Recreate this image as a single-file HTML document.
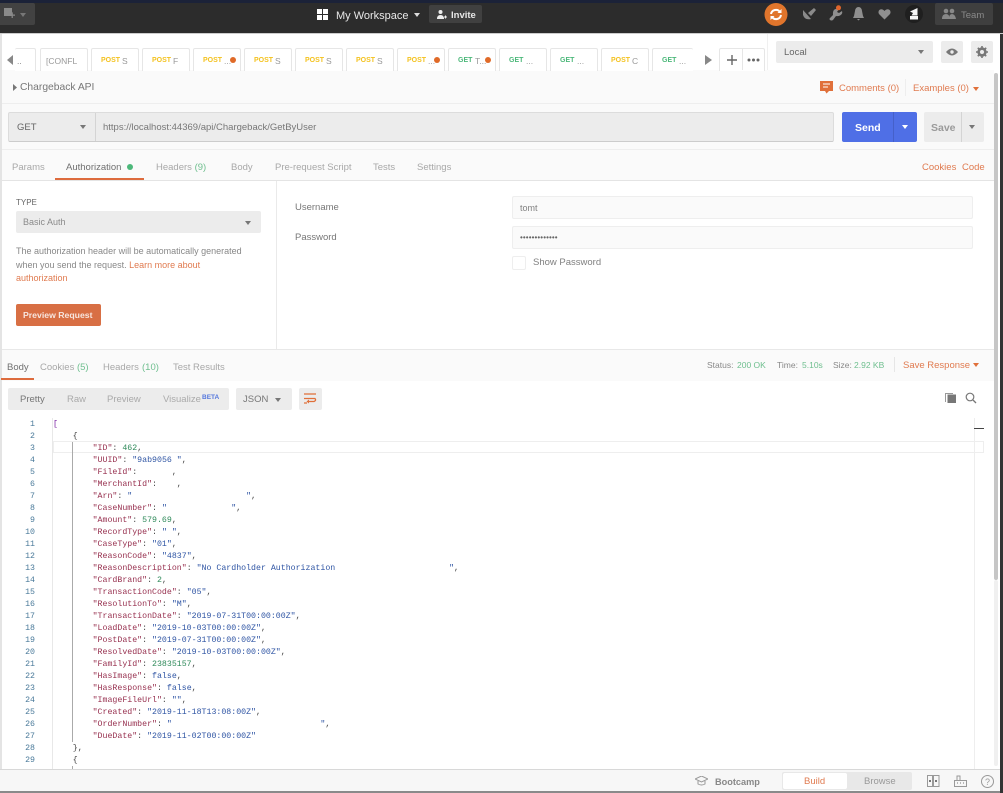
<!DOCTYPE html>
<html><head><meta charset="utf-8"><style>
html,body{margin:0;padding:0;background:#fff}
#p{position:relative;width:1003px;height:793px;overflow:hidden;background:#fff;font-family:"Liberation Sans",sans-serif;font-size:9.5px;color:#808080;filter:blur(.35px)}
#p div,#p span.a,#p svg{position:absolute}
.t{white-space:nowrap;line-height:12px;margin-top:1px}
.tab{top:48px;width:46px;height:22px;background:#fff;border:1px solid #e6e6e6;border-bottom:0;border-radius:2px 2px 0 0;box-sizing:content-box}
.m{position:absolute;top:6px;left:9px;font-size:7px;font-weight:bold;line-height:12px;white-space:nowrap}
.p{color:#f4c21f}.g{color:#4cb87a}
.r{position:absolute;left:25px;top:6px;font-size:8.5px;color:#999;line-height:12px}
.d{position:absolute;width:6px;height:6px;border-radius:50%;background:#e06a28;left:34px;top:8px}
.c{width:0;height:0;border-left:3.5px solid transparent;border-right:3.5px solid transparent;border-top:4px solid #777}
.o{color:#e07b50}
.ln{left:0;width:35px;text-align:right;font:8.25px/12px "Liberation Mono",monospace;color:#4a7a9a;margin-top:1px}
.cd{left:53px;font:8.25px/12px "Liberation Mono",monospace;white-space:pre;color:#444;margin-top:1px}
.k{color:#97304f}.s{color:#2f55a4}.n{color:#2f8a5a}
</style></head><body><div id="p">
<!-- top bar -->
<div style="left:0;top:0;width:1003px;height:3px;background:#1b2238"></div>
<div style="left:0;top:3px;width:1003px;height:30px;background:#2c2c2c"></div>
<div style="left:0;top:33px;width:1003px;height:1px;background:#ccc"></div>
<div style="left:0;top:3px;width:35px;height:22px;background:#424242;border-radius:0 2px 2px 0"></div>
<div style="left:4px;top:8px;width:8px;height:8px;background:#8a8a8a"></div>
<div class="t" style="left:9px;top:9px;font-size:11px;color:#8a8a8a;font-weight:bold">+</div>
<div class="c" style="left:20px;top:13px;border-top-color:#777"></div>
<svg style="left:317px;top:9px" width="11" height="11"><path d="M0 0h5v5H0zM6 0h5v5H6zM0 6h5v5H0zM6 6h5v5H6z" fill="#fff"/></svg>
<div class="t" style="left:336px;top:9px;font-size:11px;color:#e8e8e8">My Workspace</div>
<div class="c" style="left:414px;top:13px;border-top-color:#ddd"></div>
<div style="left:429px;top:5px;width:53px;height:18px;background:#404040;border-radius:2px"></div>
<svg style="left:436px;top:9px" width="11" height="11"><circle cx="4.500" cy="3" r="2" fill="#eee"/><path d="M1 10q0-4 3.500-4t3.500 4z" fill="#eee"/><path d="M8 8h3M9.500 6.500v3" stroke="#eee"/></svg>
<div class="t" style="left:451px;top:9px;font-size:9.500px;color:#e8e8e8;font-weight:bold">Invite</div>
<svg style="left:764px;top:3px" width="24" height="24"><circle cx="12" cy="11.500" r="11.500" fill="#e0752c"/><path d="M7 11a5 5 0 0 1 9-2M17 12a5 5 0 0 1-9 2" stroke="#fff" stroke-width="2" fill="none"/><path d="M17.500 6v4h-4zM6.500 17v-4h4z" fill="#fff"/></svg>
<svg style="left:803px;top:7px" width="15" height="14"><path d="M0 3l8 9q-5 1-7-2-2-3-1-7zM5 6l6-5 2 2-5 6z" fill="#8a8a8a"/></svg>
<svg style="left:829px;top:5px" width="17" height="16"><path d="M1 15q-1-1 0-2l3-3q-.5-4 1.500-5.500Q8 3 10 4L8 7l2 1 3-2q1 3-2 4.500-2 1-4 .5l-3 4q-1.500 1-3 0z" fill="#8f8f8f"/><circle cx="9.500" cy="2.800" r="2.500" fill="#e0652c"/></svg>
<svg style="left:853px;top:7px" width="11" height="14"><path d="M5.500 0q3 0 3.500 4l1 5 1 2H0l1-2 1-5q.5-4 3.500-4zM4 12h3l-1.500 1.500z" fill="#8f8f8f"/></svg>
<svg style="left:878px;top:8px" width="13" height="12"><path d="M6.500 11.500L1 6q-1.500-3 1-4.500 2.500-1 4.500 1.500Q8.500.5 11 1.500 13.500 3 12 6z" fill="#8f8f8f"/></svg>
<svg style="left:905px;top:5px" width="18" height="18"><circle cx="9" cy="9" r="9" fill="#1f1f1f"/><path d="M5 14.500V11h8v3.500zM6.500 10.500L8 8 5 6.500 12.500 3v7.500z" fill="#f5f5f5"/></svg>
<div style="left:935px;top:3px;width:58px;height:22px;background:#3f3f3f;border-radius:2px"></div>
<svg style="left:942px;top:8px" width="14" height="12"><circle cx="4" cy="3" r="2.300" fill="#888"/><circle cx="10" cy="3" r="2.300" fill="#888"/><path d="M0 11q0-5 4-5t3 5zM7 11q0-5 3-5t4 5z" fill="#888"/></svg>
<div class="t" style="left:961px;top:9px;font-size:9.500px;color:#8a8a8a">Team</div>
<!-- tabs -->
<div style="left:0;top:34px;width:2px;height:735px;background:#e4e4e4"></div>
<div style="left:2px;top:70px;width:992px;height:33px;background:#fafafa"></div>
<svg style="left:7px;top:55px" width="7" height="10"><path d="M6 0v10L0 5z" fill="#888"/></svg>
<div class="tab" style="left:15px;width:20px;border-left:0"></div>
<div class="t" style="left:17px;top:54px;font-size:8.500px">..</div>
<div class="tab" style="left:40px"><span class="r" style="left:5px">[CONFL</span></div>
<div class="tab" style="left:91px"><span class="m p">POST</span><span class="r" style="left:30px">S</span></div>
<div class="tab" style="left:142px"><span class="m p">POST</span><span class="r" style="left:30px">F</span></div>
<div class="tab" style="left:193px"><span class="m p">POST</span><span class="r" style="left:30px">...</span><span class="d" style="left:36px"></span></div>
<div class="tab" style="left:244px"><span class="m p">POST</span><span class="r" style="left:30px">S</span></div>
<div class="tab" style="left:295px"><span class="m p">POST</span><span class="r" style="left:30px">S</span></div>
<div class="tab" style="left:346px"><span class="m p">POST</span><span class="r" style="left:30px">S</span></div>
<div class="tab" style="left:397px"><span class="m p">POST</span><span class="r" style="left:30px">...</span><span class="d" style="left:36px"></span></div>
<div class="tab" style="left:448px"><span class="m g">GET</span><span class="r" style="left:26px">T...</span><span class="d" style="left:36px"></span></div>
<div class="tab" style="left:499px"><span class="m g">GET</span><span class="r" style="left:26px">...</span></div>
<div class="tab" style="left:550px"><span class="m g">GET</span><span class="r" style="left:26px">...</span></div>
<div class="tab" style="left:601px"><span class="m p">POST</span><span class="r" style="left:30px">C</span></div>
<div class="tab" style="left:652px;width:40px;border-right:0"><span class="m g">GET</span><span class="r" style="left:26px">...</span></div>
<svg style="left:705px;top:55px" width="7" height="10"><path d="M0 0v10l7-5z" fill="#888"/></svg>
<div class="tab" style="left:719px;width:44px"></div>
<div style="left:742px;top:49px;width:1px;height:21px;background:#e6e6e6"></div>
<svg style="left:727px;top:55px" width="10" height="10"><path d="M5 0v10M0 5h10" stroke="#666" stroke-width="1.400"/></svg>
<svg style="left:747px;top:58px" width="13" height="4"><circle cx="2" cy="2" r="1.500" fill="#666"/><circle cx="6.500" cy="2" r="1.500" fill="#666"/><circle cx="11" cy="2" r="1.500" fill="#666"/></svg>
<div style="left:767px;top:34px;width:1px;height:36px;background:#f0f0f0"></div>
<div style="left:776px;top:41px;width:157px;height:22px;background:#ececec;border-radius:2px"></div>
<div class="t" style="left:784px;top:46px;font-size:9.500px;color:#666">Local</div>
<div class="c" style="left:918px;top:50px"></div>
<div style="left:941px;top:41px;width:22px;height:22px;background:#ececec;border-radius:2px"></div>
<svg style="left:946px;top:48px" width="12" height="8"><path d="M0 4q6-7 12 0-6 7-12 0z" fill="#777"/><circle cx="6" cy="4" r="1.700" fill="#ececec"/></svg>
<div style="left:971px;top:41px;width:22px;height:22px;background:#ececec;border-radius:2px"></div>
<svg style="left:976px;top:46px" width="12" height="12"><circle cx="6" cy="6" r="3.500" fill="none" stroke="#777" stroke-width="2.400"/><path d="M6 0v12M0 6h12M1.800 1.800l8.400 8.400M10.200 1.800l-8.400 8.400" stroke="#777" stroke-width="1.600"/><circle cx="6" cy="6" r="2" fill="#ececec"/></svg>
<!-- title row -->
<svg style="left:13px;top:84px" width="4" height="7"><path d="M0 0v7l4-3.500z" fill="#777"/></svg>
<div class="t" style="left:20px;top:81px;font-size:10.300px;color:#777">Chargeback API</div>
<svg style="left:820px;top:81px" width="13" height="13"><path d="M0 0h13v10H9l-2.500 2.500L5 10H0z" fill="#e0703a"/><path d="M3 3h7M3 6h5" stroke="#fff"/></svg>
<div class="t o" style="left:839px;top:82px;font-size:9.500px">Comments (0)</div>
<div style="left:905px;top:79px;width:1px;height:17px;background:#eee"></div>
<div class="t o" style="left:913px;top:82px;font-size:9.500px">Examples (0)</div>
<div class="c" style="left:973px;top:87px;border-top-color:#e0703a"></div>
<div style="left:2px;top:103px;width:992px;height:1px;background:#eee"></div>
<!-- url row -->
<div style="left:2px;top:104px;width:992px;height:45px;background:#fafafa"></div>
<div style="left:8px;top:112px;width:826px;height:30px;background:#ececec;border:1px solid #dcdcdc;border-bottom:1px solid #ccc;border-radius:2px;box-sizing:border-box"></div>
<div style="left:95px;top:113px;width:1px;height:28px;background:#d4d4d4"></div>
<div class="t" style="left:17px;top:121px;font-size:9.500px;color:#666">GET</div>
<div class="c" style="left:80px;top:125px"></div>
<div class="t" style="left:103px;top:121px;font-size:9.500px;color:#777">https://localhost:44369/api/Chargeback/GetByUser</div>
<div style="left:842px;top:112px;width:75px;height:30px;background:#4f6fe6;border-radius:2px"></div>
<div style="left:893px;top:112px;width:1px;height:30px;background:#4560c9"></div>
<div class="t" style="left:855px;top:121px;font-size:10.500px;font-weight:bold;color:#fff">Send</div>
<div class="c" style="left:902px;top:125px;border-top-color:#fff"></div>
<div style="left:924px;top:112px;width:60px;height:30px;background:#ececec;border-radius:2px"></div>
<div style="left:961px;top:112px;width:1px;height:30px;background:#d4d4d4"></div>
<div class="t" style="left:931px;top:121px;font-size:10.500px;font-weight:bold;color:#9a9a9a">Save</div>
<div class="c" style="left:969px;top:125px"></div>
<div style="left:2px;top:149px;width:992px;height:1px;background:#eee"></div>
<!-- req tabs -->
<div style="left:2px;top:150px;width:992px;height:30px;background:#fafafa"></div>
<div class="t" style="left:12px;top:161px;color:#a8a8a8">Params</div>
<div class="t" style="left:66px;top:161px;color:#707070">Authorization</div>
<div style="left:127px;top:164px;width:6px;height:6px;border-radius:50%;background:#4cb87a"></div>
<div class="t" style="left:156px;top:161px;color:#a8a8a8">Headers <span style="color:#6fbf8f">(9)</span></div>
<div class="t" style="left:231px;top:161px;color:#a8a8a8">Body</div>
<div class="t" style="left:275px;top:161px;color:#a8a8a8">Pre-request Script</div>
<div class="t" style="left:373px;top:161px;color:#a8a8a8">Tests</div>
<div class="t" style="left:417px;top:161px;color:#a8a8a8">Settings</div>
<div class="t o" style="left:922px;top:161px">Cookies</div>
<div class="t o" style="left:962px;top:161px">Code</div>
<div style="left:2px;top:180px;width:992px;height:1px;background:#e4e4e4"></div>
<div style="left:55px;top:178px;width:89px;height:2px;background:#dd6b3d"></div>
<!-- auth -->
<div style="left:276px;top:181px;width:1px;height:168px;background:#eaeaea"></div>
<div class="t" style="left:16px;top:196px;font-size:8px;color:#666">TYPE</div>
<div style="left:16px;top:211px;width:245px;height:22px;background:#ececec;border-radius:2px"></div>
<div class="t" style="left:23px;top:215px;color:#8a8a8a;font-size:9px">Basic Auth</div>
<div class="c" style="left:245px;top:221px"></div>
<div class="t" style="left:16px;top:244px;font-size:9px;color:#888;line-height:13.500px">The authorization header will be automatically generated<br>when you send the request. <span class="o">Learn more about</span><br><span class="o">authorization</span></div>
<div style="left:16px;top:304px;width:85px;height:22px;background:#d86f44;border-radius:2px"></div>
<div class="t" style="left:23px;top:308px;font-size:8.700px;font-weight:bold;color:#f7e6df">Preview Request</div>
<div class="t" style="left:295px;top:201px;color:#777">Username</div>
<div class="t" style="left:295px;top:231px;color:#777">Password</div>
<div style="left:512px;top:196px;width:461px;height:23px;background:#fafafa;border:1px solid #eee;border-radius:2px;box-sizing:border-box"></div>
<div style="left:512px;top:226px;width:461px;height:23px;background:#fafafa;border:1px solid #eee;border-radius:2px;box-sizing:border-box"></div>
<div class="t" style="left:520px;top:201px;color:#808080;font-size:9px">tomt</div>
<div class="t" style="left:520px;top:231px;color:#666;font-size:8px;letter-spacing:.1px">•••••••••••••</div>
<div style="left:512px;top:256px;width:14px;height:14px;background:#fff;border:1px solid #eee;border-radius:2px;box-sizing:border-box"></div>
<div class="t" style="left:533px;top:256px;color:#808080;font-size:9.500px">Show Password</div>
<div style="left:2px;top:349px;width:992px;height:1px;background:#e8e8e8"></div>
<!-- response tabs -->
<div style="left:2px;top:350px;width:992px;height:31px;background:#fafafa"></div>
<div class="t" style="left:7px;top:361px;color:#707070">Body</div>
<div class="t" style="left:40px;top:361px;color:#a8a8a8">Cookies <span style="color:#6fbf8f">(5)</span></div>
<div class="t" style="left:103px;top:361px;color:#a8a8a8">Header<span style="color:#a8a8a8">s</span></div>
<div class="t" style="left:142px;top:361px;color:#6fbf8f">(10)</div>
<div class="t" style="left:173px;top:361px;color:#a8a8a8">Test Results</div>
<div style="left:1px;top:378px;width:33px;height:2px;background:#dd6b3d"></div>
<div class="t" style="left:707px;top:358px;font-size:8.500px;color:#888">Status:</div>
<div class="t" style="left:737px;top:358px;font-size:8.500px;color:#6fbf8f">200 OK</div>
<div class="t" style="left:777px;top:358px;font-size:8.500px;color:#888">Time:</div>
<div class="t" style="left:802px;top:358px;font-size:8.500px;color:#6fbf8f">5.10s</div>
<div class="t" style="left:833px;top:358px;font-size:8.500px;color:#888">Size:</div>
<div class="t" style="left:854px;top:358px;font-size:8.500px;color:#6fbf8f">2.92 KB</div>
<div style="left:894px;top:357px;width:1px;height:15px;background:#e6e6e6"></div>
<div class="t o" style="left:903px;top:359px;font-size:9.500px">Save Response</div>
<div class="c" style="left:973px;top:363px;border-top-color:#e0703a"></div>
<!-- toolbar -->
<div style="left:8px;top:388px;width:221px;height:22px;background:#ececec;border-radius:2px"></div>
<div class="t" style="left:20px;top:393px;color:#777">Pretty</div>
<div class="t" style="left:67px;top:393px;color:#aaa">Raw</div>
<div class="t" style="left:107px;top:393px;color:#aaa">Preview</div>
<div class="t" style="left:163px;top:393px;color:#aaa">Visualize</div>
<div class="t" style="left:202px;top:391px;font-size:6.500px;color:#5577dd;font-weight:bold">BETA</div>
<div style="left:236px;top:388px;width:56px;height:22px;background:#ececec;border-radius:2px"></div>
<div class="t" style="left:243px;top:393px;color:#777">JSON</div>
<div class="c" style="left:275px;top:398px"></div>
<div style="left:299px;top:388px;width:23px;height:22px;background:#ececec;border-radius:2px"></div>
<svg style="left:304px;top:393px" width="13" height="12"><path d="M0 1h12M0 5.500h11q1.500 2-1 3H4M0 10h3" stroke="#e0703a" stroke-width="1.300" fill="none"/><path d="M5 6.500v4L2.500 8.500z" fill="#e0703a"/></svg>
<svg style="left:945px;top:392px" width="12" height="12"><path d="M0 1h8v1H1v8H0z" fill="#999"/><path d="M2.500 2.500H11V11H2.500z" fill="#777"/></svg>
<svg style="left:965px;top:392px" width="12" height="12"><circle cx="5" cy="5" r="3.800" stroke="#777" stroke-width="1.200" fill="none"/><path d="M8 8l3 3" stroke="#777" stroke-width="1.300"/></svg>
<!-- code -->
<div style="left:52px;top:418px;width:1px;height:351px;background:#e8e8e8"></div>
<div style="left:53px;top:441px;width:931px;height:12px;border:1px solid #eee;box-sizing:border-box"></div>
<div style="left:72px;top:442px;width:1px;height:300px;background:#aaa"></div>
<div style="left:72px;top:766px;width:1px;height:3px;background:#aaa"></div>
<div style="left:974px;top:418px;width:1px;height:351px;background:#eee"></div>
<div style="left:974px;top:428px;width:10px;height:1px;background:#444"></div>
<div class="ln" style="top:418px">1<br>2<br>3<br>4<br>5<br>6<br>7<br>8<br>9<br>10<br>11<br>12<br>13<br>14<br>15<br>16<br>17<br>18<br>19<br>20<br>21<br>22<br>23<br>24<br>25<br>26<br>27<br>28<br>29</div>
<div class="cd" style="top:418px"><span style="color:#7a1fa2">[</span>
    {
        <span class="k">"ID"</span>: <span class="n">462</span>,
        <span class="k">"UUID"</span>: <span class="s">"9ab9056 "</span>,
        <span class="k">"FileId"</span>:       ,
        <span class="k">"MerchantId"</span>:    ,
        <span class="k">"Arn"</span>: <span class="s">"                       "</span>,
        <span class="k">"CaseNumber"</span>: <span class="s">"             "</span>,
        <span class="k">"Amount"</span>: <span class="n">579.69</span>,
        <span class="k">"RecordType"</span>: <span class="s">" "</span>,
        <span class="k">"CaseType"</span>: <span class="s">"01"</span>,
        <span class="k">"ReasonCode"</span>: <span class="s">"4837"</span>,
        <span class="k">"ReasonDescription"</span>: <span class="s">"No Cardholder Authorization                       "</span>,
        <span class="k">"CardBrand"</span>: <span class="n">2</span>,
        <span class="k">"TransactionCode"</span>: <span class="s">"05"</span>,
        <span class="k">"ResolutionTo"</span>: <span class="s">"M"</span>,
        <span class="k">"TransactionDate"</span>: <span class="s">"2019-07-31T00:00:00Z"</span>,
        <span class="k">"LoadDate"</span>: <span class="s">"2019-10-03T00:00:00Z"</span>,
        <span class="k">"PostDate"</span>: <span class="s">"2019-07-31T00:00:00Z"</span>,
        <span class="k">"ResolvedDate"</span>: <span class="s">"2019-10-03T00:00:00Z"</span>,
        <span class="k">"FamilyId"</span>: <span class="n">23835157</span>,
        <span class="k">"HasImage"</span>: <span class="s">false</span>,
        <span class="k">"HasResponse"</span>: <span class="s">false</span>,
        <span class="k">"ImageFileUrl"</span>: <span class="s">""</span>,
        <span class="k">"Created"</span>: <span class="s">"2019-11-18T13:08:00Z"</span>,
        <span class="k">"OrderNumber"</span>: <span class="s">"                              "</span>,
        <span class="k">"DueDate"</span>: <span class="s">"2019-11-02T00:00:00Z"</span>
    },
    {</div>
<!-- scrollbar -->
<div style="left:994px;top:70px;width:6px;height:699px;background:#fff"></div>
<div style="left:994px;top:73px;width:4px;height:507px;background:#c6c6c6;border-radius:2px"></div>
<div style="left:994px;top:580px;width:4px;height:186px;background:#f0f0f0;border-radius:2px"></div>
<!-- footer -->
<div style="left:0;top:769px;width:1000px;height:22px;background:#f7f7f7;border-top:1px solid #d8d8d8;box-sizing:border-box"></div>
<div style="left:0;top:791px;width:1003px;height:2px;background:#8a8a8a"></div>
<svg style="left:695px;top:776px" width="13" height="10"><path d="M0 3l6.500-3L13 3 6.500 6zM3 5v3q3.500 2 7 0V5" fill="none" stroke="#999"/></svg>
<div class="t" style="left:715px;top:775px;font-size:9.200px;color:#888;font-weight:bold">Bootcamp</div>
<div style="left:782px;top:772px;width:130px;height:18px;background:#e8e8e8;border-radius:2px"></div>
<div style="left:783px;top:773px;width:64px;height:16px;background:#fff;border-radius:2px"></div>
<div class="t o" style="left:804px;top:775px;font-size:9.500px">Build</div>
<div class="t" style="left:864px;top:775px;font-size:9.500px;color:#999">Browse</div>
<svg style="left:927px;top:775px" width="13" height="12"><rect x=".5" y=".5" width="5" height="11" fill="none" stroke="#999"/><rect x="6.500" y=".5" width="5.500" height="11" fill="none" stroke="#999"/><path d="M2 5h2v2H2zM8 5h2v2H8z" fill="#777"/></svg>
<svg style="left:954px;top:775px" width="13" height="12"><path d="M.5 11.500v-6h12v6zM3 5.500V1h3v4.500" fill="none" stroke="#999"/><path d="M3 8h1M6 8h1M9 8h1" stroke="#777"/></svg>
<svg style="left:981px;top:775px" width="13" height="13"><circle cx="6.500" cy="6.500" r="6" fill="none" stroke="#999"/><text x="6.500" y="10" font-size="9" text-anchor="middle" fill="#999" font-family="Liberation Sans">?</text></svg>
<!-- right edge -->
<div style="left:1000px;top:34px;width:3px;height:759px;background:#333"></div>
</div></body></html>
